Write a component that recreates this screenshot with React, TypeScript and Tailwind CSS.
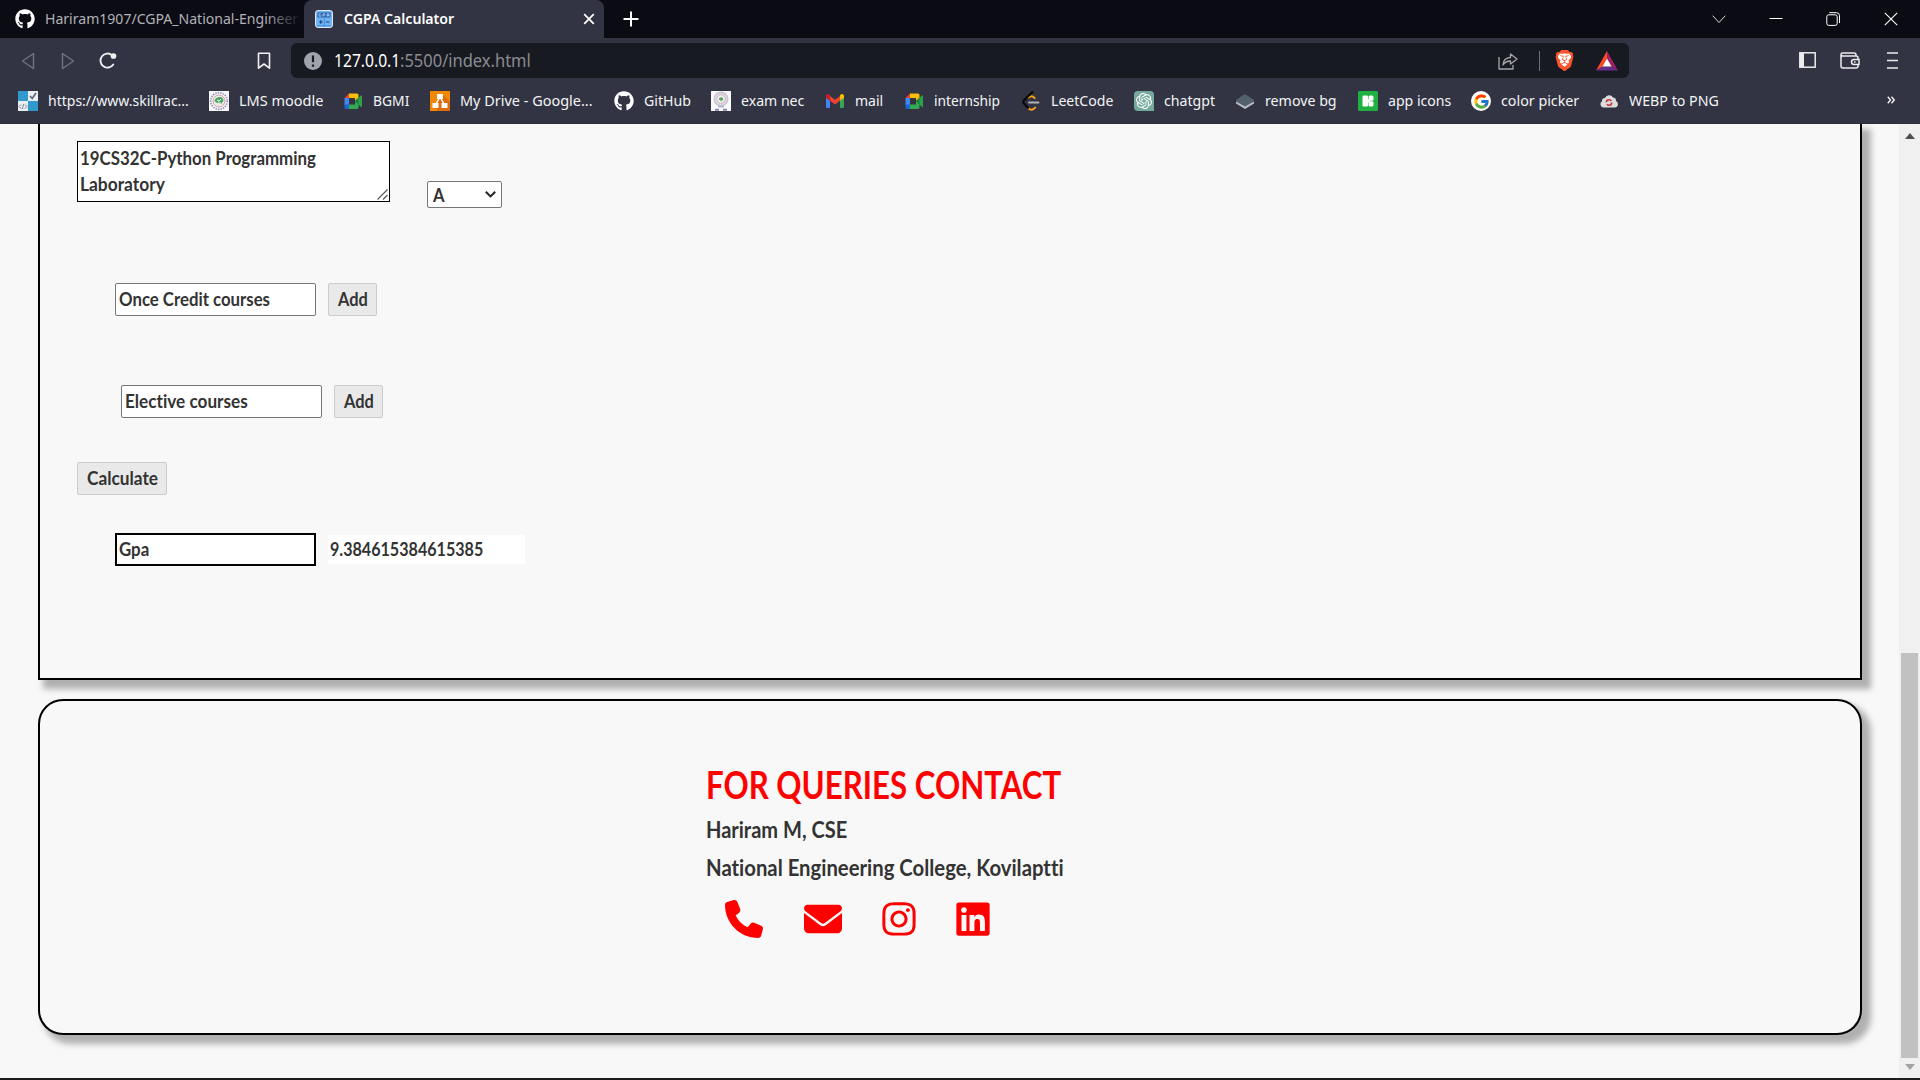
import { useLayoutEffect, useRef, useState } from "react";
import type { ReactNode } from "react";
import { FaEnvelope, FaGithub, FaInstagram, FaLinkedin, FaPhone } from "react-icons/fa6";
import { FcGoogle } from "react-icons/fc";
import { SiBrave, SiOpenai } from "react-icons/si";

/* Single line of text condensed or widened to an exact advance width. */
function Fit({ w, children, className = "" }: { w: number; children: ReactNode; className?: string }) {
  const ref = useRef<HTMLSpanElement>(null);
  const [scale, setScale] = useState(1);
  useLayoutEffect(() => {
    if (ref.current) setScale(w / ref.current.offsetWidth);
  }, [w]);
  return (
    <span className={`block shrink-0 ${className}`} style={{ width: w }}>
      <span
        ref={ref}
        className="inline-block origin-left whitespace-nowrap align-top [font-variant-ligatures:none]"
        style={{ transform: `scaleX(${scale})` }}
      >
        {children}
      </span>
    </span>
  );
}

const SkillIcon = () => (
  <svg viewBox="0 0 20 20" className="size-5">
    <rect width="20" height="20" fill="#3299cc" />
    <rect x="10" width="10" height="10" fill="#e9eef2" />
    <rect y="10" width="10" height="10" fill="#e9eef2" />
    <path d="M12 5l2.200 2.500L18 2" fill="none" stroke="#5c6670" strokeWidth="1.600" />
    <path d="M3 13.500L1 15.500l2 2M7 13.500l2 2-2 2M5.700 13l-1.400 5" fill="none" stroke="#7d8790" strokeWidth="1" />
  </svg>
);

const CollegeIcon = () => (
  <svg viewBox="0 0 20 20" className="size-5">
    <rect width="20" height="20" fill="#f8f8fa" />
    <circle cx="10" cy="10" r="8.300" fill="none" stroke="#9a98c0" strokeWidth="1.800" strokeDasharray="1.500 1" />
    <circle cx="10" cy="10" r="6" fill="#e6eee6" stroke="#d99aa2" strokeWidth="1" />
    <path d="M5.500 10c.8-4 6.500-5.500 8.500-2.500 1.200 2.500-.5 4-2 5.500-1.500-1-4-.2-6.500-3z" fill="#4ba564" />
    <path d="M8 9l2 1.200L12 8M9 12h3" stroke="#fff" strokeWidth="1" fill="none" />
  </svg>
);

const ExamIcon = () => (
  <svg viewBox="0 0 20 20" className="size-5">
    <rect width="20" height="20" fill="#fafafc" />
    <circle cx="10" cy="8" r="6.800" fill="#dfdde8" stroke="#c4c1d8" strokeWidth="1.400" />
    <circle cx="10" cy="8" r="4.300" fill="#e9f0ea" stroke="#dcb3ba" strokeWidth="1" />
    <path d="M7.800 8.500c.3-2.500 3.200-3 4.300-1.300.5 1.500-1 2-1.500 3z" fill="#55a46d" />
    <path d="M4 18.800h4M12 18.800h4" stroke="#8583b2" strokeWidth="2" />
    <path d="M7 15.500h6" stroke="#b9b6d2" strokeWidth="2" />
  </svg>
);

const MeetIcon = () => (
  <svg viewBox="0 0 20 20" className="size-5">
    <path d="M6 2.500V7H1.500z" fill="#ea4335" />
    <path d="M1.500 7H6v7H1.500z" fill="#4285f4" />
    <path d="M1.500 13.500H6V18H3a1.500 1.500 0 0 1-1.500-1.500z" fill="#1967d2" />
    <path d="M6 2.500h8A1.500 1.500 0 0 1 15.500 4v3l-3.500 3V7H6z" fill="#fbbc04" />
    <path d="M6 13.500h6V10l3.500 3v3.500A1.500 1.500 0 0 1 14 18H6z" fill="#34a853" />
    <path d="M12 10.200L18 4.500c.500-.4 1-.2 1 .5v10.500c0 .7-.5.900-1 .5z" fill="#2aa14c" />
    <path d="M12 10.200l3.500-3.400v6.800z" fill="#188038" />
  </svg>
);

const DrawIoIcon = () => (
  <svg viewBox="0 0 20 20" className="size-5">
    <rect width="20" height="20" fill="#f08705" />
    <path d="M12 3l8 8v9H8l-3-3z" fill="#df6c0c" />
    <path d="M10 6L6 13M10 6l4 7" stroke="#fff" strokeWidth="1.500" />
    <rect x="7" y="3" width="6" height="5" rx=".6" fill="#fff" />
    <rect x="2.500" y="12" width="6" height="5" rx=".6" fill="#fff" />
    <rect x="11.500" y="12" width="6" height="5" rx=".6" fill="#fff" />
  </svg>
);

const GmailIcon = () => (
  <svg viewBox="0 0 20 20" className="size-5">
    <path d="M1 6.500l4 3V17H2.300A1.300 1.300 0 0 1 1 15.700z" fill="#4285f4" />
    <path d="M19 6.500l-4 3V17h2.700a1.300 1.300 0 0 0 1.300-1.300z" fill="#34a853" />
    <path d="M5 5l5 3.800L15 5v4.800l-5 3.800-5-3.800z" fill="#ea4335" />
    <path d="M1 7V5c0-1.800 2-2.500 3.200-1.500L5 4.200v5.600z" fill="#c5221f" />
    <path d="M19 7V5c0-1.800-2-2.500-3.200-1.500l-.8.700v5.600z" fill="#fbbc04" />
  </svg>
);

const LeetIcon = () => (
  <svg viewBox="0 0 20 20" className="size-5" fill="none" strokeLinecap="round">
    <path d="M7.500 6.500c2-1.800 4-1.800 6.200.6M7 16.800c2.500 2.800 5 2.500 7.200-.3" stroke="#ffa116" strokeWidth="2" />
    <path d="M11.500 1L3 9.300c-1 1-1 2.200 0 3.200l4 4.300" stroke="#070706" strokeWidth="2.200" />
    <path d="M8 11.500h9.500" stroke="#b3b3b3" strokeWidth="1.900" />
  </svg>
);

const ChatIcon = () => (
  <span className="flex size-5 items-center justify-center rounded-tl-[4px] rounded-tr-[4px] rounded-bl-[4px] bg-[#74aa9c] text-white">
    <SiOpenai size={16} />
  </span>
);

const LayersIcon = () => (
  <svg viewBox="0 0 20 20" className="size-5">
    <path d="M1 11l9-5.500 9 5.500v1.500L10 18l-9-5.500z" fill="#b8bfc4" />
    <path d="M1 10.500V9l9-6 9 6v1.500L10 15.500z" fill="#54616c" />
  </svg>
);

const Icons8Icon = () => (
  <svg viewBox="0 0 20 20" className="size-5">
    <rect width="20" height="20" rx="1.500" fill="#1fb141" />
    <rect x="4.500" y="4.500" width="5.500" height="11" rx="1.200" fill="#fff" />
    <rect x="10.500" y="4.500" width="5" height="5.200" rx="1.500" fill="#fff" />
    <rect x="10.500" y="10.300" width="5" height="5.200" rx="1.500" fill="#fff" />
    <path d="M9 8.500h3v3H9z" fill="#fff" />
  </svg>
);

const GoogleIcon = () => (
  <span className="flex size-5 items-center justify-center rounded-full bg-white">
    <FcGoogle size={17} />
  </span>
);

const CloudIcon = () => (
  <svg viewBox="0 0 20 20" className="size-5">
    <path d="M4 16.500a3.500 3.500 0 0 1-1-6.300A3 3 0 0 1 6 7a4.500 4.500 0 0 1 8-.5 3 3 0 0 1 3 3.500 3.500 3.500 0 0 1-.5 6.500z" fill="#dcdcdc" />
    <circle cx="10" cy="11.500" r="2.700" fill="none" stroke="#c4353a" strokeWidth="1.600" strokeDasharray="6.500 2" />
  </svg>
);

const bookmarks: { label: string; w: number; slot: string; icon: ReactNode }[] = [
  { label: "https://www.skillrac...", w: 141, slot: "w-[191px]", icon: <SkillIcon /> },
  { label: "LMS moodle", w: 84, slot: "w-[134px]", icon: <CollegeIcon /> },
  { label: "BGMI", w: 36, slot: "w-[87px]", icon: <MeetIcon /> },
  { label: "My Drive - Google...", w: 133, slot: "w-[184px]", icon: <DrawIoIcon /> },
  { label: "GitHub", w: 47, slot: "w-[97px]", icon: <FaGithub size={20} color="#fff" /> },
  { label: "exam nec", w: 63, slot: "w-[114px]", icon: <ExamIcon /> },
  { label: "mail", w: 28, slot: "w-[79px]", icon: <GmailIcon /> },
  { label: "internship", w: 66, slot: "w-[117px]", icon: <MeetIcon /> },
  { label: "LeetCode", w: 62, slot: "w-[113px]", icon: <LeetIcon /> },
  { label: "chatgpt", w: 51, slot: "w-[101px]", icon: <ChatIcon /> },
  { label: "remove bg", w: 72, slot: "w-[123px]", icon: <LayersIcon /> },
  { label: "app icons", w: 63, slot: "w-[113px]", icon: <Icons8Icon /> },
  { label: "color picker", w: 78, slot: "w-[128px]", icon: <GoogleIcon /> },
  { label: "WEBP to PNG", w: 90, slot: "w-[130px]", icon: <CloudIcon /> },
];

function TabBar() {
  return (
    <div className="flex h-[38px] bg-[#0b0b14] text-[15px]">
      <div className="flex w-[304px] items-center pl-[15px]">
        <FaGithub size={20} color="#fff" />
        <div className="relative mb-0.5 ml-[10px] w-[256px] overflow-hidden leading-[22px] text-[#b2b2b8]">
          <Fit w={253}>Hariram1907/CGPA_National-Engineer</Fit>
          <div className="absolute inset-y-0 right-0 w-9 bg-gradient-to-r from-[#0b0b14]/0 to-[#0b0b14]" />
        </div>
      </div>
      <div className="flex w-[300px] items-center rounded-t-[8px] bg-[#323443] pl-[11px]">
        <svg viewBox="0 0 18 18" className="size-[18px]">
          <rect x=".5" y=".5" width="17" height="17" rx="2.500" fill="#6fb4f2" stroke="#dfe8f2" />
          <rect x="2.500" y="2.500" width="13" height="5" fill="#2c5fa8" />
          <path d="M6 3.800H4v2.400h2V5.200M8 6.700V3.800h1.800v1.500H8M12 6.700V3.800h2v2.900M12 5.500h2" fill="none" stroke="#a8d4fa" strokeWidth=".8" />
          <path d="M4 12h3.600M5.800 10.200v3.600M10.800 12h3.600" stroke="#173f7d" strokeWidth="1.200" />
          <path d="M9.300 8.500v8M2 15.800h14" stroke="#3f83cc" strokeWidth=".8" />
        </svg>
        <Fit w={110} className="mb-0.5 ml-[11px] font-semibold leading-[22px] text-white">CGPA Calculator</Fit>
        <svg viewBox="0 0 12 12" className="ml-[129px] size-3" stroke="#fff" strokeWidth="1.800">
          <path d="M1.200 1.200l9.600 9.600M10.800 1.200l-9.600 9.600" />
        </svg>
      </div>
      <svg viewBox="0 0 16 16" className="ml-[19px] mt-[11px] size-4" stroke="#fff" strokeWidth="2">
        <path d="M8 .5v15M.5 8h15" />
      </svg>
      <div className="ml-auto mr-[22px] flex items-center text-[#dcdce0]">
        <svg viewBox="0 0 14 14" className="size-[14px]" fill="none" stroke="currentColor" strokeWidth="1">
          <path d="M.7 3.700L7 10.500l6.300-6.800" />
        </svg>
        <svg viewBox="0 0 14 14" className="ml-[43px] size-[14px]" stroke="#fff" strokeWidth="1">
          <path d="M.5 6.500h13" />
        </svg>
        <svg viewBox="0 0 14 14" className="ml-[43px] size-[14px]" fill="none" stroke="#fff" strokeWidth="1">
          <rect x=".8" y="2.800" width="10.400" height="10.600" rx="2" />
          <path d="M3.300.7H10.500a3 3 0 0 1 3 3V11" />
        </svg>
        <svg viewBox="0 0 14 14" className="ml-[44px] size-[14px]" stroke="#fff" strokeWidth="1.100">
          <path d="M.8.800l12.400 12.400M13.200.800L.8 13.200" />
        </svg>
      </div>
    </div>
  );
}

function AddressBar() {
  return (
    <div className="flex h-[45px] items-center bg-[#323443]">
      <div className="flex w-[291px] items-center pl-[21px]">
        <svg viewBox="0 0 14 18" className="h-[18px] w-[14px]" fill="none" stroke="#6f717d" strokeWidth="1.500" strokeLinejoin="round">
          <path d="M12.500 1.500v15L1.500 9z" />
        </svg>
        <svg viewBox="0 0 14 18" className="ml-[26px] h-[18px] w-[14px]" fill="none" stroke="#6f717d" strokeWidth="1.500" strokeLinejoin="round">
          <path d="M1.500 1.500v15l11-7.500z" />
        </svg>
        <svg viewBox="0 0 18 18" className="ml-[24px] size-[18px]" fill="none" stroke="#f0f0f2" strokeWidth="1.900">
          <path d="M14.300 12.500A7 7 0 1 1 13 3.200" strokeLinecap="round" />
          <circle cx="14.500" cy="4" r="1.900" fill="#f0f0f2" />
        </svg>
        <svg viewBox="0 0 14 18" className="ml-[140px] h-[18px] w-[14px]" fill="none" stroke="#f0f0f2" strokeWidth="1.600">
          <path d="M1.500 1.200h11v15L7 12l-5.500 4.200z" strokeLinejoin="round" />
        </svg>
      </div>
      <div className="flex h-[35px] w-[1338px] items-center rounded-[6px] bg-[#181a21] pl-[13px]">
        <svg viewBox="0 0 18 18" className="size-[18px]">
          <circle cx="9" cy="9" r="9" fill="#a0a2ac" />
          <path d="M9 3.500v6.800M9 12.500v2.200" stroke="#181a21" strokeWidth="2.200" />
        </svg>
        <div className="mb-0.5 ml-3 flex text-[18px] leading-6">
          <Fit w={66} className="text-white">127.0.0.1</Fit>
          <Fit w={131} className="text-[#8a8c92]">:5500/index.html</Fit>
        </div>
        <svg viewBox="0 0 20 18" className="ml-auto mr-[21px] h-[18px] w-5" fill="none" stroke="#a5a7ad" strokeWidth="1.300" strokeLinejoin="round">
          <path d="M1 5v12h14v-4" />
          <path d="M5 13C5.200 8.500 8 5.700 12.500 5.500V2L19 7l-6.500 5V9C9.500 9 7 10 5 13z" />
        </svg>
        <div className="h-5 w-px bg-[#6c6e75]" />
        <div className="relative ml-[14px] flex h-[23px] w-[21px] items-center justify-center">
          <div className="absolute left-[4px] top-[4px] h-[14px] w-[13px] rounded-b-[6px] bg-white" />
          <SiBrave size={23} color="#fb542b" className="relative" />
        </div>
        <svg viewBox="0 0 22 20" className="ml-[21px] mr-[11px] h-5 w-[22px]">
          <path d="M11 0L0 19.500l7-4L11 7.500z" fill="#ff4724" />
          <path d="M11 0l11 19.500-7-4L11 7.500z" fill="#9e1f63" />
          <path d="M0 19.500h22l-7-4H7z" fill="#662d91" />
          <path d="M11 7.500l4.500 8h-9z" fill="#fff" />
        </svg>
      </div>
      <div className="mb-px ml-auto mr-[22px] flex items-center text-[#ececee]">
        <svg viewBox="0 0 17 16" className="h-4 w-[17px]" fill="none" stroke="currentColor" strokeWidth="1.500">
          <rect x=".8" y=".8" width="15.400" height="14.400" />
          <path d="M1 1h4v14H1z" fill="currentColor" stroke="none" />
        </svg>
        <svg viewBox="0 0 20 17" className="ml-[24px] h-[17px] w-5" fill="none" stroke="currentColor" strokeWidth="1.500">
          <path d="M1 2.500V14a2 2 0 0 0 2 2h13a2 2 0 0 0 2-2V6a2 2 0 0 0-2-2H2.500A1.500 1.500 0 0 1 2.500 1h11.500a2 2 0 0 1 2 2V4" />
          <path d="M19 7.500h-5a2.500 2.500 0 0 0 0 5h5z" fill="#323443" />
          <path d="M14 10h1.500" />
        </svg>
        <svg viewBox="0 0 11 17" className="ml-[27px] h-[17px] w-[11px]" stroke="currentColor" strokeWidth="1.600">
          <path d="M0 1h11M0 8.500h11M0 16h11" />
        </svg>
      </div>
    </div>
  );
}

function BookmarkBar() {
  return (
    <div className="flex h-[41px] items-center border-b border-[#2b2d39] bg-[#323443] pb-[4px] pl-[18px] text-[15px] leading-5 text-[#f4f4f6]">
      {bookmarks.map((b) => (
        <div key={b.label} className={`flex shrink-0 items-center ${b.slot}`}>
          {b.icon}
          <Fit w={b.w} className="mb-0.5 ml-[10px]">{b.label}</Fit>
        </div>
      ))}
      <svg viewBox="0 0 8 8" className="mb-0.5 ml-auto mr-[25px] size-2" fill="none" stroke="#f0f0f2" strokeWidth="1.400">
        <path d="M.8.800L3.500 4 .8 7.200M4.500.800L7.200 4 4.500 7.200" />
      </svg>
    </div>
  );
}

function CourseInput({ text, w }: { text: string; w: number }) {
  return (
    <div className="flex h-[33px] w-[201px] items-center rounded-[2px] border border-[#767676] bg-white pb-0.5 pl-[3px]">
      <Fit w={w}>{text}</Fit>
    </div>
  );
}

function Button({ text, w }: { text: string; w: number }) {
  return (
    <button className="flex h-[33px] items-center rounded-[2px] border border-[#cbcbcb] bg-[#e9e9e9] pb-0.5 pl-[9px] pr-2">
      <Fit w={w}>{text}</Fit>
    </button>
  );
}

function GradeCard() {
  return (
    <section className="h-[556px] border-x-2 border-b-2 border-black bg-[#f8f8f8] pl-[37px] pt-[17px] text-[18px] font-bold leading-[26px] shadow-[7px_7px_6px_2px_#b0b0b0]">
      <div className="flex items-start">
        <div className="relative h-[61px] w-[313px] border border-black bg-white pl-[2px] pt-[3px]">
          <Fit w={236}>19CS32C-Python Programming</Fit>
          <Fit w={85}>Laboratory</Fit>
          <svg viewBox="0 0 11 11" className="absolute bottom-[1px] right-[1px] size-[11px]" stroke="#555" strokeWidth="1.100">
            <path d="M.5 10.500l10-10M6 10.500L10.500 6" />
          </svg>
        </div>
        <div className="ml-[37px] mt-10 flex h-[27px] w-[75px] items-center justify-between rounded-[2px] border border-[#767676] bg-white pl-[5px] pr-[5px]">
          <Fit w={12}>A</Fit>
          <svg viewBox="0 0 11 7" className="h-[7px] w-[11px]" fill="none" stroke="#222" strokeWidth="2">
            <path d="M.8.800L5.500 5.400 10.200.800" />
          </svg>
        </div>
      </div>
      <div className="ml-[38px] mt-[75px] flex gap-3">
        <CourseInput text="Once Credit courses" w={151} />
        <Button text="Add" w={30} />
      </div>
      <div className="ml-[44px] mt-[69px] flex gap-3">
        <CourseInput text="Elective courses" w={123} />
        <Button text="Add" w={30} />
      </div>
      <div className="mt-[44px] flex">
        <Button text="Calculate" w={71} />
      </div>
      <div className="ml-[38px] mt-[38px] flex items-center gap-3">
        <div className="flex h-[33px] w-[201px] items-center border-2 border-black bg-white pb-0.5 pl-[2px]">
          <Fit w={30}>Gpa</Fit>
        </div>
        <div className="flex h-[29px] w-[197px] items-center bg-white pb-0.5 pl-[2px]">
          <Fit w={153}>9.384615384615385</Fit>
        </div>
      </div>
    </section>
  );
}

function ContactCard() {
  return (
    <section className="mt-[19px] h-[336px] rounded-[25px] border-2 border-black bg-[#f8f8f8] pl-[666px] pt-[60px] font-bold shadow-[7px_7px_6px_2px_#b0b0b0]">
      <Fit w={355} className="text-[38px] leading-[46px] text-[#ff0000]">FOR QUERIES CONTACT</Fit>
      <Fit w={141} className="mt-1 text-[22px] leading-[38px]">Hariram M, CSE</Fit>
      <Fit w={358} className="text-[22px] leading-[38px]">National Engineering College, Kovilaptti</Fit>
      <div className="ml-[19px] mt-[13px] flex text-[#ff0000]">
        <FaPhone size={38} />
        <FaEnvelope size={38} className="ml-[41px]" />
        <FaInstagram size={38} className="ml-[38px]" />
        <FaLinkedin size={38} className="ml-[36px]" />
      </div>
    </section>
  );
}

function Scrollbar() {
  return (
    <div className="flex w-[21px] flex-col items-center bg-[#f0f0f0]">
      <svg viewBox="0 0 10 6" className="mt-[9px] h-[6px] w-[10px]">
        <path d="M5 0l5 6H0z" fill="#505050" />
      </svg>
      <div className="mt-[514px] h-[405px] w-[17px] bg-[#c1c1c1]" />
      <svg viewBox="0 0 10 6" className="mt-[6px] h-[6px] w-[10px]">
        <path d="M5 6L0 0h10z" fill="#a3a3a3" />
      </svg>
    </div>
  );
}

export default function App() {
  return (
    <div className="flex h-[1080px] w-[1920px] flex-col overflow-hidden border-b-2 border-[#1d1d20] bg-[#f8f8f8] font-['Noto_Sans',sans-serif]">
      <TabBar />
      <AddressBar />
      <BookmarkBar />
      <div className="flex min-h-0 flex-1 overflow-hidden">
        <main className="w-[1899px] pl-[38px] pr-[37px] font-['Lato',sans-serif] text-[#333]">
          <GradeCard />
          <ContactCard />
        </main>
        <Scrollbar />
      </div>
    </div>
  );
}
